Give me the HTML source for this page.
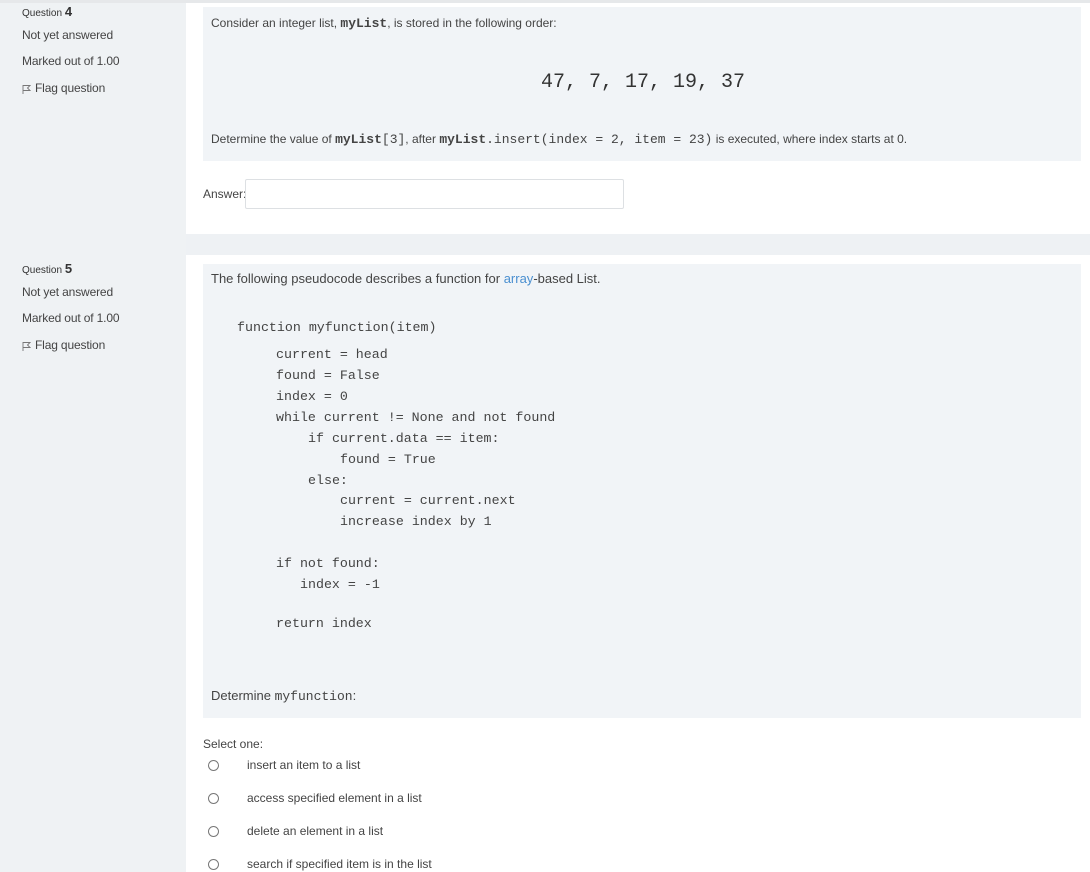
<!DOCTYPE html>
<html><head><meta charset="utf-8"><style>
*{margin:0;padding:0;box-sizing:border-box}
body{width:1090px;height:872px;overflow:hidden;background:#fff;font-family:"Liberation Sans",sans-serif;color:#333;position:relative}
.side{position:absolute;left:0;width:186px;background:#eff2f4}
.abs{position:absolute;white-space:nowrap}
.q{font-size:10px;color:#333}
.q b{font-size:13px}
.s{font-size:12px;color:#444;letter-spacing:-0.15px}
.panel{position:absolute;left:203px;width:878px;background:#f1f4f7}
.mono{font-family:"Liberation Mono",monospace}
.t{font-size:12px;color:#444}
.code{font-family:"Liberation Mono",monospace;font-size:13.3px;color:#444}
.r{position:absolute;left:208px;width:11px;height:11px;border:1px solid #777;border-radius:50%;background:#fff}
.fl{display:inline-block;vertical-align:-2px;margin-right:4px}
</style></head><body>
<div style="position:absolute;left:0;top:0;width:1090px;height:3px;background:#e6e8ea"></div>
<div class="side" style="top:3px;height:869px"></div>
<div style="position:absolute;left:186px;top:234px;width:904px;height:21px;background:#eef1f4"></div>

<div class="abs q" style="left:22px;top:4px">Question <b>4</b></div>
<div class="abs s" style="left:22px;top:28px">Not yet answered</div>
<div class="abs s" style="left:22px;top:54px">Marked out of 1.00</div>
<div class="abs s" style="left:22px;top:81px"><svg class="fl" width="9" height="10" viewBox="0 0 9 10"><path d="M1 1v9M1 1.5h7L5.5 4 8 6.5H1" fill="none" stroke="#777" stroke-width="0.9"/></svg>Flag question</div>

<div class="panel" style="top:7px;height:154px"></div>
<div class="abs t" style="left:211px;top:16px">Consider an integer list, <b class="mono" style="font-size:13px">myList</b>, is stored in the following order:</div>
<div class="abs mono" style="left:541px;top:71px;font-size:20px;color:#333">47, 7, 17, 19, 37</div>
<div class="abs t" style="left:211px;top:132px">Determine the value of <b class="mono" style="font-size:13px">myList</b><span class="mono" style="font-size:13px">[3]</span>, after <b class="mono" style="font-size:13px">myList</b><span class="mono" style="font-size:13px">.insert(index = 2, item = 23)</span> is executed, where index starts at 0.</div>
<div class="abs t" style="left:203px;top:187px">Answer:</div>
<div style="position:absolute;left:245px;top:179px;width:379px;height:30px;border:1px solid #dde0e3;background:#fff;border-radius:2px"></div>

<div class="abs q" style="left:22px;top:261px">Question <b>5</b></div>
<div class="abs s" style="left:22px;top:285px">Not yet answered</div>
<div class="abs s" style="left:22px;top:311px">Marked out of 1.00</div>
<div class="abs s" style="left:22px;top:338px"><svg class="fl" width="9" height="10" viewBox="0 0 9 10"><path d="M1 1v9M1 1.5h7L5.5 4 8 6.5H1" fill="none" stroke="#777" stroke-width="0.9"/></svg>Flag question</div>

<div class="panel" style="top:264px;height:454px"></div>
<div class="abs" style="left:211px;top:271px;font-size:13px;color:#444">The following pseudocode describes a function for <span style="color:#4a8fd0">array</span>-based List.</div>
<div class="abs code" style="left:237px;top:320px">function myfunction(item)</div>
<div class="abs code" style="left:276px;top:347px">current = head</div>
<div class="abs code" style="left:276px;top:368px">found = False</div>
<div class="abs code" style="left:276px;top:389px">index = 0</div>
<div class="abs code" style="left:276px;top:410px">while current != None and not found</div>
<div class="abs code" style="left:308px;top:431px">if current.data == item:</div>
<div class="abs code" style="left:340px;top:452px">found = True</div>
<div class="abs code" style="left:308px;top:473px">else:</div>
<div class="abs code" style="left:340px;top:493px">current = current.next</div>
<div class="abs code" style="left:340px;top:514px">increase index by 1</div>
<div class="abs code" style="left:276px;top:556px">if not found:</div>
<div class="abs code" style="left:300px;top:577px">index = -1</div>
<div class="abs code" style="left:276px;top:616px">return index</div>
<div class="abs" style="left:211px;top:688px;font-size:13px;color:#444">Determine <span class="mono" style="font-size:13px">myfunction</span>:</div>

<div class="abs t" style="left:203px;top:737px">Select one:</div>
<div class="r" style="top:760px"></div><div class="abs t" style="left:247px;top:758px">insert an item to a list</div>
<div class="r" style="top:793px"></div><div class="abs t" style="left:247px;top:791px">access specified element in a list</div>
<div class="r" style="top:826px"></div><div class="abs t" style="left:247px;top:824px">delete an element in a list</div>
<div class="r" style="top:859px"></div><div class="abs t" style="left:247px;top:857px">search if specified item is in the list</div>
</body></html>
